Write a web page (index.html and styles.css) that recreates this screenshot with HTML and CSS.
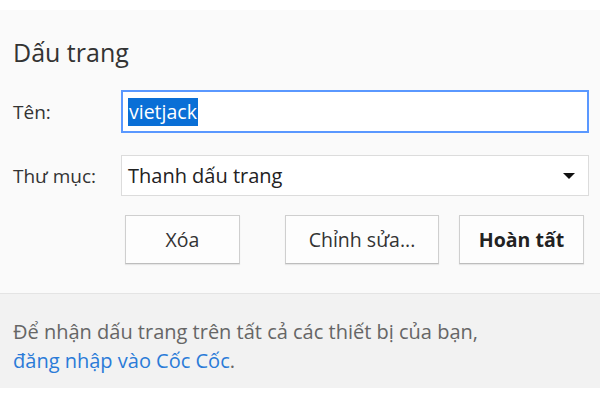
FILE: index.html
```html
<!DOCTYPE html>
<html lang="vi">
<head>
<meta charset="utf-8">
<link rel="stylesheet" href="styles.css">
</head>
<body>
<div class="dialog">
  <div class="main">
    <h1 class="title">Dấu trang</h1>
    <div class="form">
      <label class="label">Tên:</label>
      <div class="input focused"><span class="sel">vietjack</span></div>
      <label class="label">Thư mục:</label>
      <div class="input select">
        <span>Thanh dấu trang</span>
        <svg class="arrow" width="12" height="6" viewBox="0 0 12 6"><path d="M0 0H12L6 6Z" fill="#111"/></svg>
      </div>
    </div>
    <div class="buttons">
      <button class="btn btn-del">Xóa</button>
      <button class="btn btn-edit">Chỉnh sửa...</button>
      <button class="btn btn-done">Hoàn tất</button>
    </div>
  </div>
  <div class="footer">
    <p class="note">Để nhận dấu trang trên tất cả các thiết bị của bạn,<br><a class="link" href="#">đăng nhập vào Cốc Cốc</a>.</p>
  </div>
</div>
</body>
</html>
```
FILE: styles.css
```css
html, body {
  margin: 0;
  padding: 0;
  background: #fff;
  font-family: "Open Sans", "Noto Sans", sans-serif;
}
.dialog {
  margin-top: 10px;
  height: 378px;
  display: flex;
  flex-direction: column;
}
.main {
  background: #fafafa;
  height: 283px;
  padding: 0 11px 0 13px;
  box-sizing: border-box;
}
.title {
  margin: 0;
  padding-top: 26px;
  font-size: 25px;
  font-weight: 400;
  line-height: 32px;
  color: #333;
}
.form {
  margin-top: 22px;
  display: grid;
  grid-template-columns: 108px 1fr;
  row-gap: 22px;
  align-items: center;
}
.label {
  font-size: 19px;
  color: #333;
}
.input {
  height: 43px;
  box-sizing: border-box;
  background: #fff;
  display: flex;
  align-items: center;
  font-size: 19.5px;
  color: #222;
}
.focused {
  border: 2px solid #5a98ff;
  padding-left: 5px;
}
.sel {
  background: #0a6fd6;
  color: #fff;
  line-height: 28px;
  padding: 0 1px;
}
.select {
  height: 41px;
  border: 1px solid #dcdcdc;
  padding: 0 13px 0 6px;
  justify-content: space-between;
  font-size: 20px;
}
.buttons {
  display: flex;
  margin-top: 19px;
  padding-left: 112px;
}
.btn {
  height: 49px;
  box-sizing: border-box;
  border: 1px solid #cfcfcf;
  border-bottom-color: #bdbdbd;
  background: #fdfdfd;
  box-shadow: 0 1px 1px rgba(0,0,0,0.08);
  font-family: inherit;
  font-size: 19.5px;
  color: #333;
  padding: 0;
}
.btn-del { width: 115px; }
.btn-edit { width: 154px; margin-left: 45px; }
.btn-done { width: 125px; margin-left: 20px; font-weight: 700; font-size: 19.5px; color: #222; }
.footer {
  flex: 1;
  background: #f2f2f2;
  border-top: 1px solid #e4e4e4;
  padding: 23px 13px 0;
}
.note {
  margin: 0;
  font-size: 20px;
  line-height: 29px;
  color: #666;
}
.link {
  color: #2a7bd8;
  text-decoration: none;
}
```
